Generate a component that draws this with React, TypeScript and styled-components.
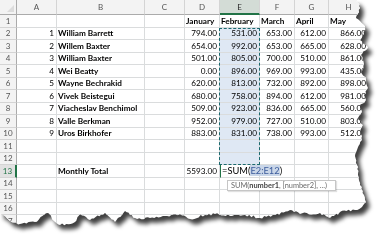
import React from "react";
import styled, { createGlobalStyle, css } from "styled-components";

const GlobalStyle = createGlobalStyle`
  html, body { margin: 0; padding: 0; background: #fff; }
  body { font-family: Lato, "Liberation Sans", sans-serif; }
`;

const COLS = [17, 40, 88, 40, 35, 40, 35, 34, 40];
const LETTERS = ["A", "B", "C", "D", "E", "F", "G", "H"];
const ROW_COUNT = 17;

// torn paper edge, jagged polygon built from a few key points
const rightKeys: [number, number][] = [
  [357, 0], [360, 8], [356, 18], [365, 26], [364, 34], [360, 40], [368, 47], [361, 55],
  [364, 64], [361, 72], [366, 79], [368, 88], [364, 95], [366, 100], [360, 106], [362, 112],
  [358, 118], [363, 125], [360, 132], [362, 140], [357, 150], [355, 156], [357, 165],
  [358, 175], [360, 185], [364, 195], [366, 202],
];
const bottomKeys: [number, number][] = [
  [362, 207], [355, 210], [340, 212], [330, 218], [320, 213], [300, 214], [290, 210],
  [275, 215], [260, 218], [245, 215], [230, 216], [215, 214], [205, 215], [190, 219],
  [180, 214], [165, 216], [150, 218], [135, 218], [125, 211], [115, 222], [105, 213],
  [90, 220], [80, 214], [75, 222], [60, 225], [55, 222], [48, 213], [35, 222], [20, 224],
  [10, 221], [0, 213],
];

const tornPath = (() => {
  let s = 7;
  const rnd = () => {
    s = (s * 16807) % 2147483647;
    return (s - 1) / 2147483646 - 0.5;
  };
  const pts: string[] = ["0px 0px"];
  const keys = [...rightKeys, ...bottomKeys];
  for (let i = 0; i < keys.length - 1; i++) {
    const [x1, y1] = keys[i];
    const [x2, y2] = keys[i + 1];
    const len = Math.hypot(x2 - x1, y2 - y1);
    const steps = Math.max(1, Math.round(len / 2.2));
    for (let k = 0; k < steps; k++) {
      const t = k / steps;
      const j = k === 0 ? 0 : rnd() * 2.4;
      const horizontal = i >= rightKeys.length - 1;
      const x = x1 + (x2 - x1) * t + (horizontal ? 0 : j);
      const y = y1 + (y2 - y1) * t + (horizontal ? j : 0);
      pts.push(`${x.toFixed(1)}px ${y.toFixed(1)}px`);
    }
  }
  pts.push("0px 213px");
  return pts.join(", ");
})();

const Stage = styled.div`
  width: 383px;
  height: 240px;
  overflow: hidden;
  background: #fff;
`;

const Shadow = styled.div`
  filter: drop-shadow(4px 5px 2px rgba(0, 0, 0, 0.75));
`;

const Sheet = styled.div`
  width: 383px;
  height: 240px;
  background: #fff;
  overflow: hidden;
  clip-path: polygon(${tornPath});
`;

const Grid = styled.div`
  display: grid;
  grid-template-columns: ${COLS.map((c) => `${c}px`).join(" ")};
  grid-template-rows: 15px repeat(${ROW_COUNT}, 12.5px);
  font-size: 8.2px;
  color: #000;
`;

interface PlaceProps {
  $r: number;
  $c: number;
}

const place = css<PlaceProps>`
  grid-row: ${(p) => p.$r + 1};
  grid-column: ${(p) => p.$c + 1};
  box-sizing: border-box;
  min-width: 0;
  white-space: nowrap;
`;

const Corner = styled.div<PlaceProps>`
  ${place}
  position: relative;
  background: #f3f3f3;
  border-right: 1px solid #ababab;
  border-bottom: 1px solid #ababab;
  &::after {
    content: "";
    position: absolute;
    right: 2px;
    bottom: 2px;
    border-left: 7px solid transparent;
    border-bottom: 7px solid #dcdcdc;
  }
`;

const ColHead = styled.div<PlaceProps & { $active?: boolean }>`
  ${place}
  display: flex;
  align-items: center;
  justify-content: center;
  font-size: 8px;
  color: ${(p) => (p.$active ? "#2a2a2a" : "#555")};
  background: ${(p) => (p.$active ? "#d3dcd6" : "#f3f3f3")};
  border-right: 1px solid #d4d4d4;
  border-bottom: ${(p) => (p.$active ? "2px solid #217346" : "1px solid #ababab")};
`;

const RowHead = styled.div<PlaceProps & { $active?: boolean }>`
  ${place}
  display: flex;
  align-items: center;
  justify-content: center;
  font-size: 8px;
  color: ${(p) => (p.$active ? "#217346" : "#555")};
  background: ${(p) => (p.$active ? "#e1e1e1" : "#f3f3f3")};
  border-bottom: 1px solid #d4d4d4;
  border-right: ${(p) => (p.$active ? "2px solid #217346" : "1px solid #ababab")};
`;

const Cell = styled.div<PlaceProps & { $right?: boolean; $bold?: boolean; $fill?: boolean }>`
  ${place}
  display: flex;
  align-items: center;
  justify-content: ${(p) => (p.$right ? "flex-end" : "flex-start")};
  padding: 0 2px 0 1px;
  overflow: visible;
  font-weight: ${(p) => (p.$bold ? 700 : 400)};
  background: ${(p) => (p.$fill ? "#dfe8f4" : "transparent")};
  border-right: 1px solid #dadcdd;
  border-bottom: 1px solid #dadcdd;
`;

const EditCell = styled(Cell)`
  position: relative;
  z-index: 4;
  padding-left: 1px;
  border-left: 1px solid #217346;
`;

const EditText = styled.span`
  font-size: 9.3px;
  background: #fff;
  padding-right: 2px;
`;

const RangeRef = styled.span`
  background: #c9d6e8;
  color: #3c5c9c;
`;

const Ants = styled.div`
  grid-row: 3 / 14;
  grid-column: 6;
  box-sizing: border-box;
  margin-left: -1px;
  border: 1.5px dashed #1d6b70;
  pointer-events: none;
  z-index: 3;
`;

const Tip = styled.div`
  position: absolute;
  left: 6px;
  top: 15px;
  box-sizing: border-box;
  width: 109px;
  height: 11px;
  padding-left: 3px;
  display: flex;
  align-items: center;
  font-size: 7.4px;
  color: #6a6a6a;
  background: #fff;
  border: 1px solid #c6c6c6;
  box-shadow: 1px 1px 1px rgba(0, 0, 0, 0.12);
  b {
    color: #444;
  }
`;

const people: [string, string[]][] = [
  ["William Barrett", ["794.00", "531.00", "653.00", "612.00", "866.00"]],
  ["Willem Baxter", ["654.00", "992.00", "653.00", "665.00", "628.00"]],
  ["William Baxter", ["501.00", "805.00", "700.00", "510.00", "861.00"]],
  ["Wei Beatty", ["0.00", "896.00", "969.00", "993.00", "435.00"]],
  ["Wayne Bechrakid", ["620.00", "813.00", "732.00", "892.00", "898.00"]],
  ["Vivek Beistegui", ["680.00", "758.00", "894.00", "612.00", "981.00"]],
  ["Viacheslav Benchimol", ["509.00", "923.00", "836.00", "665.00", "560.00"]],
  ["Valle Berkman", ["952.00", "979.00", "727.00", "510.00", "803.00"]],
  ["Uros Birkhofer", ["883.00", "831.00", "738.00", "993.00", "512.00"]],
];

const months = ["January", "February", "March", "April", "May"];

export default function App() {
  const cells: React.ReactNode[] = [];

  for (let r = 1; r <= ROW_COUNT; r++) {
    cells.push(
      <RowHead key={`rh${r}`} $r={r} $c={0} $active={r === 13}>
        {r}
      </RowHead>
    );
    for (let c = 1; c <= LETTERS.length; c++) {
      const key = `${r}-${c}`;
      const fill = c === 5 && r >= 2 && r <= 12;
      const person = r >= 2 && r <= 10 ? people[r - 2] : null;

      if (r === 13 && c === 5) {
        cells.push(
          <EditCell key={key} $r={r} $c={c}>
            <EditText>
              =SUM(<RangeRef>E2:E12</RangeRef>)
            </EditText>
            <Tip>
              SUM(<b>number1</b>, [number2], ...)
            </Tip>
          </EditCell>
        );
        continue;
      }

      let content: React.ReactNode = null;
      let right = false;
      let bold = false;
      if (r === 1 && c >= 4) {
        content = months[c - 4];
        bold = true;
      } else if (person && c === 1) {
        content = r - 1;
        right = true;
      } else if (person && c === 2) {
        content = person[0];
        bold = true;
      } else if (person && c >= 4) {
        content = person[1][c - 4];
        right = true;
      } else if (r === 13 && c === 2) {
        content = "Monthly Total";
        bold = true;
      } else if (r === 13 && c === 4) {
        content = "5593.00";
        right = true;
      }

      cells.push(
        <Cell key={key} $r={r} $c={c} $right={right} $bold={bold} $fill={fill}>
          {content}
        </Cell>
      );
    }
  }

  return (
    <Stage>
      <GlobalStyle />
      <Shadow>
        <Sheet>
          <Grid>
            <Corner $r={0} $c={0} />
            {LETTERS.map((l, i) => (
              <ColHead key={l} $r={0} $c={i + 1} $active={l === "E"}>
                {l}
              </ColHead>
            ))}
            {cells}
            <Ants />
          </Grid>
        </Sheet>
      </Shadow>
    </Stage>
  );
}
